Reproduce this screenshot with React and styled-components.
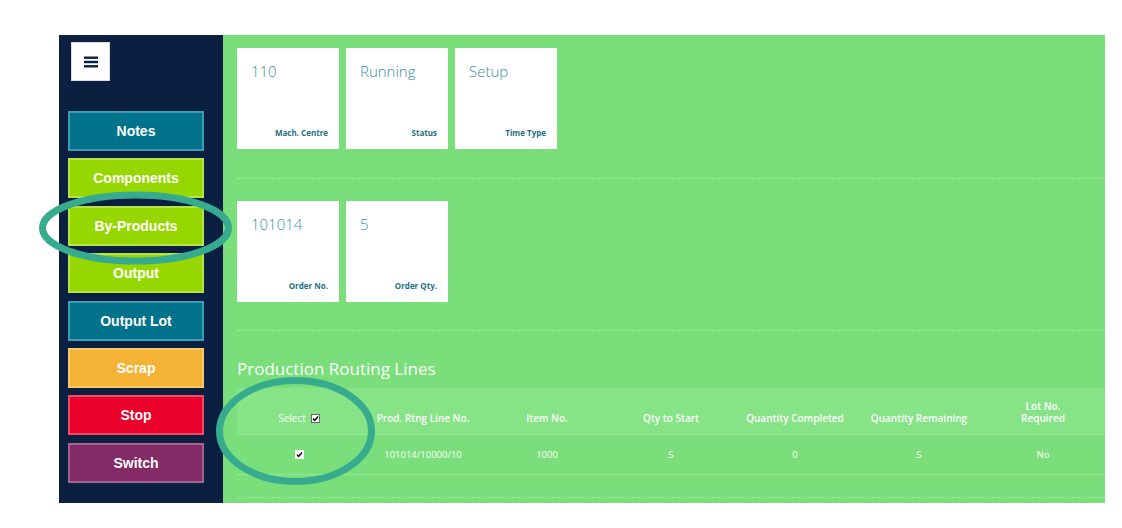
import styled, { createGlobalStyle } from "styled-components"

const Global = createGlobalStyle`
	html, body {
		margin: 0;
		background: #fff;
	}
	* { box-sizing: border-box; }
`

const Page = styled.div`
	position: relative;
	width: 1122px;
	height: 528px;
	padding: 35px 0 0 59px;
`

const Frame = styled.div`
	display: flex;
	width: 1046px;
	height: 468px;
`

const Sidebar = styled.aside`
	width: 164px;
	background: #0b2040;
	padding: 7px 0 0 9px;
	display: flex;
	flex-direction: column;
`

const Burger = styled.button`
	width: 39px;
	height: 39px;
	margin-left: 3px;
	margin-bottom: 30px;
	background: #fff;
	border: 1px solid #d8dde4;
	display: flex;
	align-items: center;
	justify-content: center;
	padding: 0;
`

const Actions = styled.div`
	display: flex;
	flex-direction: column;
	gap: 7.4px;
`

const Action = styled.button`
	width: 136px;
	height: 40px;
	background: ${p => p.$bg};
	border: 2px solid ${p => p.$edge};
	color: #fff;
	font-family: "Liberation Sans", Arial, sans-serif;
	font-weight: bold;
	font-size: 14px;
	padding: 0;
`

const Main = styled.main`
	flex: 1;
	background: #7ade7a;
	padding: 13px 0 0 14px;
	font-family: "Open Sans", "Noto Sans", sans-serif;
`

const Section = styled.section`
	padding: ${p => p.$top || 0}px 0 ${p => p.$bottom || 28}px;
	border-bottom: 1px dashed #9be89b;
`

const Cards = styled.div`
	display: flex;
	gap: 7px;
`

const Card = styled.div`
	width: 102px;
	height: 101px;
	background: #fff;
	padding: 13px 11px 11px 14px;
	display: flex;
	flex-direction: column;
	justify-content: space-between;
`

const Value = styled.div`
	font-size: 15px;
	font-weight: 300;
	color: #3a8fa6;
	line-height: 20px;
`

const Caption = styled.div`
	align-self: flex-end;
	font-size: 8px;
	font-weight: 700;
	color: #1d6f86;
`

const Title = styled.h2`
	margin: 0 0 7px;
	font-size: 17px;
	font-weight: 400;
	color: #fff;
	line-height: 24px;
`

const Table = styled.table`
	width: 100%;
	border-collapse: collapse;
	table-layout: fixed;
	color: #fff;
	font-size: 9.5px;
	text-align: center;
`

const Head = styled.th`
	height: 46px;
	background: #86e386;
	font-size: 10px;
	font-weight: ${p => (p.$light ? 400 : 600)};
	border-bottom: 1px solid #96e896;
	line-height: 12px;
	white-space: nowrap;
	vertical-align: bottom;
	padding: 0 4px 10px;
`

const Cell = styled.td`
	height: 40px;
	border-bottom: 1px solid #96e896;
	font-weight: 400;
`

const BoxIcon = styled.svg`
	vertical-align: -1px;
	margin-left: ${p => (p.$boxed ? 5 : 0)}px;
`

const Overlay = styled.svg`
	position: absolute;
	inset: 0;
	pointer-events: none;
`

const actions = [
	["Notes", "#00728c", "#3e9cb1"],
	["Components", "#97d700", "#b4e34a"],
	["By-Products", "#97d700", "#b4e34a"],
	["Output", "#97d700", "#b4e34a"],
	["Output Lot", "#00728c", "#3e9cb1"],
	["Scrap", "#f5b335", "#f8c767"],
	["Stop", "#ea002a", "#f04b67"],
	["Switch", "#832a67", "#a5638f"],
]

const Check = ({ boxed }) => (
	<BoxIcon $boxed={boxed} width="9" height="9" viewBox="0 0 9 9">
		<rect x="0.5" y="0.5" width="8" height="8" fill="#fff" stroke={boxed ? "#666" : "#fff"} />
		<path d="M2 4.6 L3.7 6.3 L7 2.4" fill="none" stroke="#111" strokeWidth="1.5" />
	</BoxIcon>
)

const columns = ["Prod. Rtng Line No.", "Item No.", "Qty to Start", "Quantity Completed", "Quantity Remaining"]
const row = ["101014/10000/10", "1000", "5", "0", "5", "No"]

export default function App() {
	return (
		<Page>
			<Global />
			<Frame>
				<Sidebar>
					<Burger aria-label="menu">
						<svg width="14" height="12" viewBox="0 0 14 12">
							<rect y="0.5" width="14" height="2.4" fill="#0b2040" />
							<rect y="4.8" width="14" height="2.4" fill="#0b2040" />
							<rect y="9.1" width="14" height="2.4" fill="#0b2040" />
						</svg>
					</Burger>
					<Actions>
						{actions.map(([label, bg, edge]) => (
							<Action key={label} $bg={bg} $edge={edge}>{label}</Action>
						))}
					</Actions>
				</Sidebar>
				<Main>
					<Section $bottom={29}>
						<Cards>
							<Card><Value>110</Value><Caption>Mach. Centre</Caption></Card>
							<Card><Value>Running</Value><Caption>Status</Caption></Card>
							<Card><Value>Setup</Value><Caption>Time Type</Caption></Card>
						</Cards>
					</Section>
					<Section $top={22} $bottom={28}>
						<Cards>
							<Card><Value>101014</Value><Caption>Order No.</Caption></Card>
							<Card><Value>5</Value><Caption>Order Qty.</Caption></Card>
						</Cards>
					</Section>
					<Section $top={26} $bottom={22}>
						<Title>Production Routing Lines</Title>
						<Table>
							<thead>
								<tr>
									<Head $light>Select<Check boxed /></Head>
									{columns.map(c => <Head key={c}>{c}</Head>)}
									<Head>Lot No.<br />Required</Head>
								</tr>
							</thead>
							<tbody>
								<tr>
									<Cell><Check /></Cell>
									{row.map((v, i) => <Cell key={i}>{v}</Cell>)}
								</tr>
							</tbody>
						</Table>
					</Section>
				</Main>
			</Frame>
			<Overlay width="1122" height="528" viewBox="0 0 1122 528">
				<ellipse cx="135.5" cy="228" rx="93" ry="33" fill="none" stroke="#36ab8e" strokeWidth="7" />
				<ellipse cx="295.5" cy="431" rx="76" ry="50.5" fill="none" stroke="#36ab8e" strokeWidth="7" />
			</Overlay>
		</Page>
	)
}
